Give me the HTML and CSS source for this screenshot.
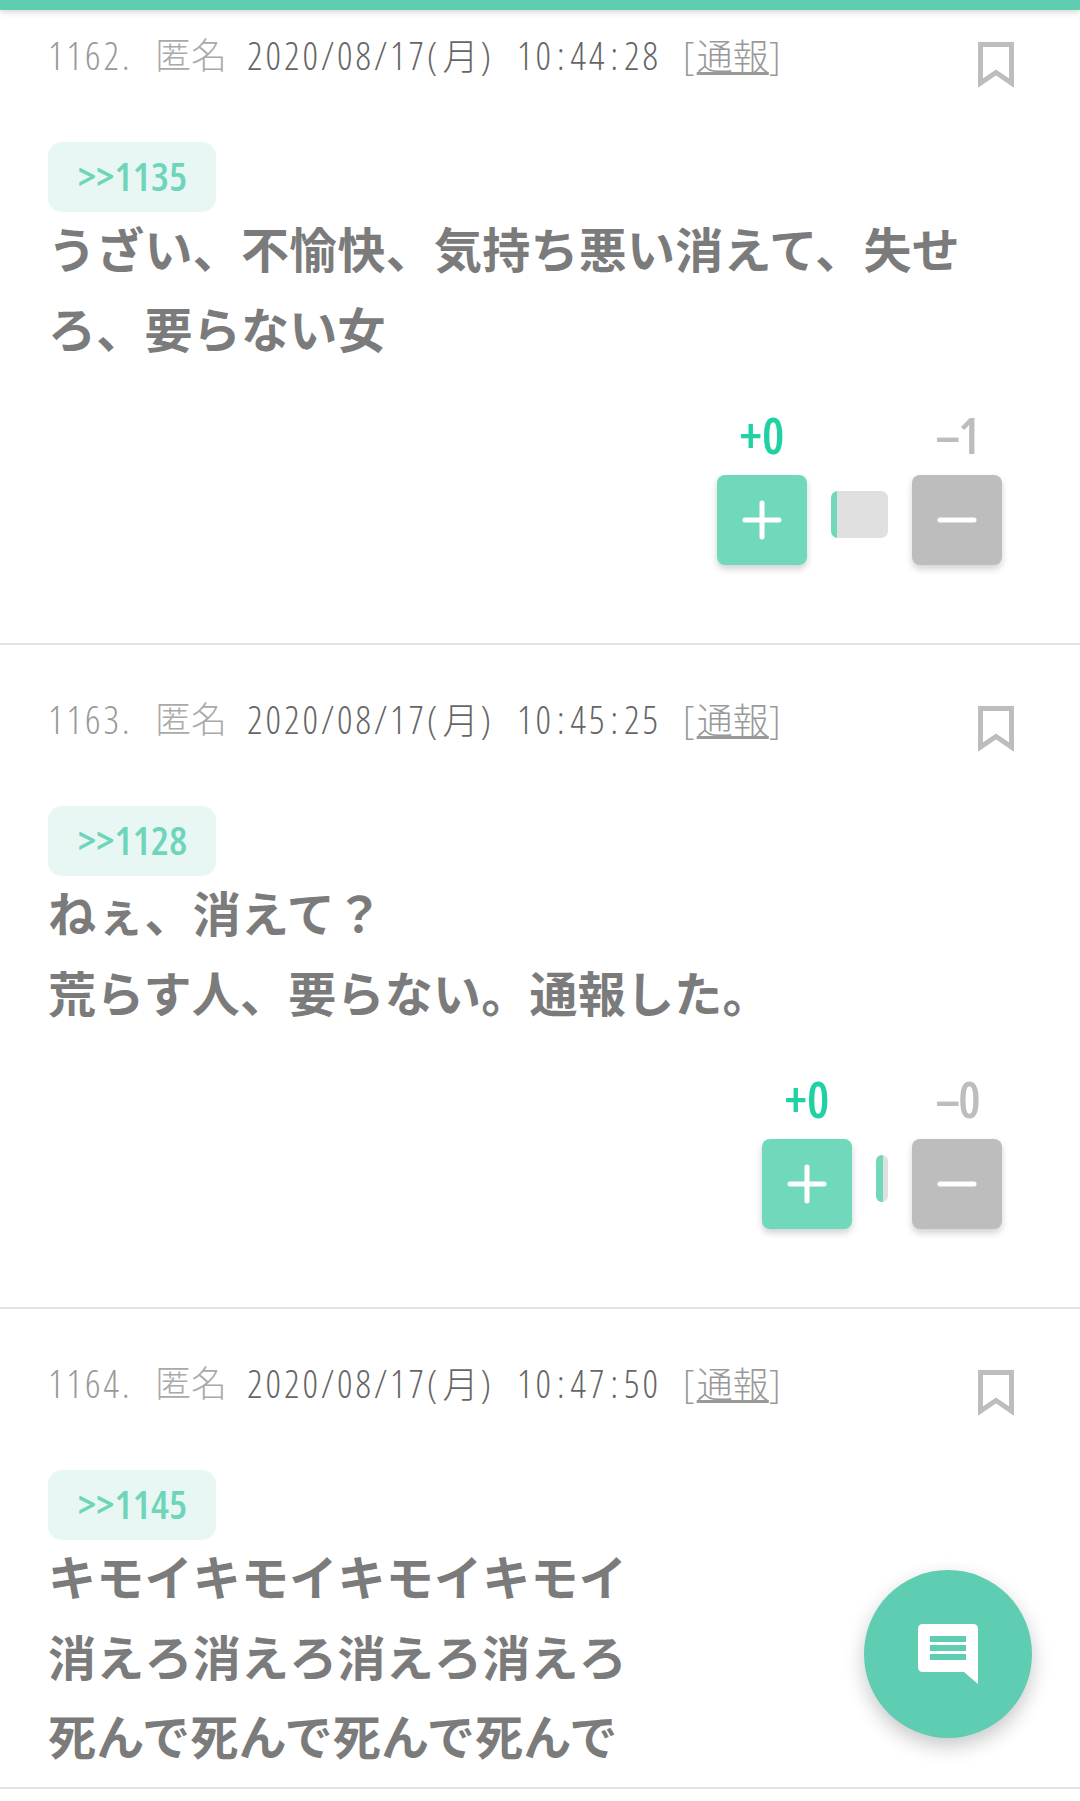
FILE: index.html
```html
<!DOCTYPE html>
<html lang="ja">
<head>
<meta charset="utf-8">
<title>コメント</title>
<link rel="stylesheet" href="styles.css">
</head>
<body>
<div class="page">
  <div class="topbar"></div>
  <article class="post post-first">
    <header class="meta">
      <div class="meta-text"><span class="num">1162.</span><span class="name">匿名</span><span class="date">2020/08/17(<span class="kanji day">月</span>)</span><span class="time">10<span class="colon">:</span>44<span class="colon">:</span>28</span><span class="report">[<u class="kanji">通報</u>]</span></div>
      <svg class="bookmark" viewBox="0 0 36 46"><path d="M2.5 2.5H33.5V41L18 30.5 2.5 41Z"/></svg>
    </header>
    <a class="anchor">&gt;&gt;1135</a>
    <p class="body">うざい、不愉快、気持ち悪い消えて、失せろ、要らない女</p>
    <div class="vote">
      <div class="vote-col"><span class="count plus">+0</span><button class="btn btn-plus"><svg viewBox="0 0 40 40"><path d="M20 3V37M3 20H37"/></svg></button></div>
      <div class="bar" style="width:57px"><div class="bar-fill" style="width:6px"></div></div>
      <div class="vote-col"><span class="count minus">–1</span><button class="btn btn-minus"><svg viewBox="0 0 40 40"><path d="M3 20H37"/></svg></button></div>
    </div>
  </article>
  <article class="post">
    <header class="meta">
      <div class="meta-text"><span class="num">1163.</span><span class="name">匿名</span><span class="date">2020/08/17(<span class="kanji day">月</span>)</span><span class="time">10<span class="colon">:</span>45<span class="colon">:</span>25</span><span class="report">[<u class="kanji">通報</u>]</span></div>
      <svg class="bookmark" viewBox="0 0 36 46"><path d="M2.5 2.5H33.5V41L18 30.5 2.5 41Z"/></svg>
    </header>
    <a class="anchor">&gt;&gt;1128</a>
    <p class="body">ねぇ、消えて？<br>荒らす人、要らない。通報した。</p>
    <div class="vote">
      <div class="vote-col"><span class="count plus">+0</span><button class="btn btn-plus"><svg viewBox="0 0 40 40"><path d="M20 3V37M3 20H37"/></svg></button></div>
      <div class="bar" style="width:12px"><div class="bar-fill" style="width:7px"></div></div>
      <div class="vote-col"><span class="count minus">–0</span><button class="btn btn-minus"><svg viewBox="0 0 40 40"><path d="M3 20H37"/></svg></button></div>
    </div>
  </article>
  <article class="post post-last">
    <header class="meta">
      <div class="meta-text"><span class="num">1164.</span><span class="name">匿名</span><span class="date">2020/08/17(<span class="kanji day">月</span>)</span><span class="time">10<span class="colon">:</span>47<span class="colon">:</span>50</span><span class="report">[<u class="kanji">通報</u>]</span></div>
      <svg class="bookmark" viewBox="0 0 36 46"><path d="M2.5 2.5H33.5V41L18 30.5 2.5 41Z"/></svg>
    </header>
    <a class="anchor">&gt;&gt;1145</a>
    <p class="body">キモイキモイキモイキモイ<br>消えろ消えろ消えろ消えろ<br>死んで死んで死んで死んで</p>
  </article>
  <button class="fab"><svg viewBox="0 0 60 60"><path fill-rule="evenodd" d="M5 0H55Q60 0 60 5V60L46 48H5Q0 48 0 43V5Q0 0 5 0ZM12 12V18H48V12ZM12 21V27H48V21ZM12 30V36H48V30Z"/></svg></button>
</div>
</body>
</html>
```
FILE: styles.css
```css
* { box-sizing: border-box; }
html, body { margin: 0; padding: 0; background: #fff; }
.page {
  position: relative;
  width: 1080px;
  height: 1801px;
  overflow: hidden;
  font-family: "Open Sans", "Noto Sans CJK JP", sans-serif;
  font-stretch: 75%;
}
.topbar {
  height: 10px;
  background: #5fcdb1;
  box-shadow: 0 2px 6px rgba(0,0,0,.18);
}
.post {
  padding: 40px 66px 78px 48px;
  border-bottom: 2px solid #e4e4e4;
}
.post-first { padding-top: 11px; }
.post-last { padding-bottom: 12px; }
.meta {
  display: flex;
  justify-content: space-between;
  align-items: flex-start;
  height: 72px;
}
.meta-text {
  display: flex;
  font-size: 38px;
  font-weight: 300;
  line-height: 69px;
  letter-spacing: 3px;
  white-space: nowrap;
}
.num { color: #999; width: 107px; }
.name { color: #aaa; width: 92px; font-size: 36px; letter-spacing: 0; }
.date { color: #666; width: 270px; }
.time { color: #666; width: 166px; }
.colon { margin: 0 3px; }
.report { color: #999; letter-spacing: 2px; }
.kanji { font-size: 36px; letter-spacing: 0; }
.day { margin: 0 2px; }
.bookmark {
  width: 36px;
  height: 46px;
  margin-top: 21px;
  flex: none;
}
.bookmark path { fill: none; stroke: #bdbdbd; stroke-width: 5; }
.anchor {
  display: inline-block;
  margin-top: 49px;
  width: 168px;
  height: 70px;
  padding: 0 0 0 30px;
  border-radius: 14px;
  background: #e8f7f3;
  color: #6dd5ba;
  font-size: 40px;
  font-weight: 600;
  letter-spacing: .3px;
  line-height: 68px;
}
.body {
  margin: -4px 0 0;
  max-width: 930px;
  color: #7b7b7b;
  font-family: "Noto Sans CJK JP", sans-serif;
  font-weight: 700;
  font-size: 48px;
  letter-spacing: .25px;
  line-height: 79.5px;
}
.vote {
  display: flex;
  justify-content: flex-end;
  align-items: flex-start;
  gap: 24px;
  margin: 48px 12px 0 0;
}
.vote-col { display: flex; flex-direction: column; align-items: center; gap: 20px; }
.count {
  font-size: 50px;
  line-height: 40px;
  font-weight: 600;
}
.plus { color: #1fd1a3; }
.minus { color: #bdbdbd; letter-spacing: -2px; }
.btn {
  width: 90px;
  height: 90px;
  padding: 0;
  border: 0;
  border-radius: 8px;
  display: flex;
  align-items: center;
  justify-content: center;
  box-shadow: 0 4px 7px rgba(0,0,0,.18);
}
.btn svg { width: 40px; height: 40px; }
.btn path { fill: none; stroke: #fff; stroke-width: 5; stroke-linecap: round; }
.btn-plus { background: #70d8bb; }
.btn-minus { background: #bdbdbd; }
.bar {
  height: 47px;
  margin-top: 76px;
  border-radius: 7px;
  background: #e0e0e0;
  overflow: hidden;
}
.bar-fill { height: 100%; background: #70d8bb; }
.fab {
  position: absolute;
  left: 864px;
  top: 1570px;
  width: 168px;
  height: 168px;
  padding: 0;
  border: 0;
  border-radius: 50%;
  background: #5fcdb1;
  display: flex;
  align-items: center;
  justify-content: center;
  box-shadow: 0 8px 20px rgba(0,0,0,.22);
}
.fab svg { width: 60px; height: 60px; }
.fab path { fill: #fff; }
```
